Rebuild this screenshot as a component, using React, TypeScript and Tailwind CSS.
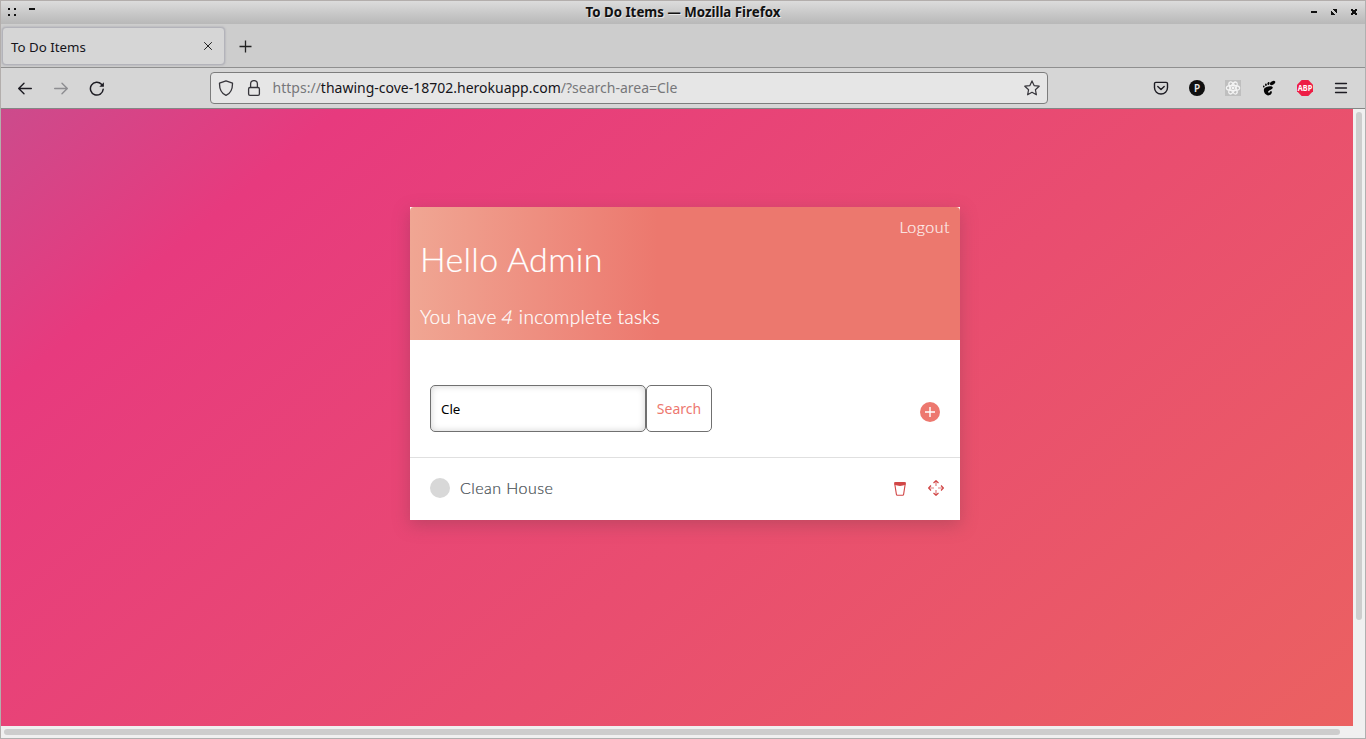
import React from 'react';

const CHROME = "font-['Noto_Sans',sans-serif]";

function TitleBar() {
  return (
    <div className="h-[23px] shrink-0 flex items-center bg-linear-to-b from-[#dcdcdc] to-[#b8b8b8] px-[7px]">
      <div className="flex w-[200px] items-center pb-px">
        <svg width="30" height="10" viewBox="0 0 30 10" shapeRendering="crispEdges" fill="#111">
          <path d="M0 1h2v2H0zM6 1h2v2H6zM0 7h2v2H0zM6 7h2v2H6zM21 1h6v2h-6z" />
        </svg>
      </div>
      <div className="flex-1 text-center text-[13.3px] leading-[21px] font-bold text-[#111] [text-shadow:1px_1px_0_#e8e8e8] whitespace-nowrap">
        <span className="inline-block">To Do Items — Mozilla Firefox</span>
      </div>
      <div className="flex w-[200px] justify-end pb-px">
        <svg width="47" height="8" viewBox="0 0 47 8" shapeRendering="crispEdges" fill="#111">
          <path d="M0 3h6v2H0z" />
          <path d="M22 1h4v4h-1V4h-1V3h-1V2h-1zM20 3h1v1h1v1h1v1h1v1h-4z" />
          <path d="M40 1h2v1h2V1h2v2h-1v2h1v2h-2V6h-2v1h-2V5h1V3h-1z" />
        </svg>
      </div>
    </div>
  );
}

function TabStrip() {
  return (
    <div className="flex h-11 shrink-0 items-start border-b border-[#8f8f8f] bg-[#cdcdcd] pt-[3px] pl-px">
      <div className="flex h-[38px] w-[223px] items-center justify-between rounded-[4px] border border-[#b3b3ba] bg-[#d6d6d6] pr-[11px] pl-2 shadow-[0_0_2px_rgba(120,120,140,0.5)]">
        <span className="pt-[3px] text-[13.3px] text-[#15141a]">To Do Items</span>
        <svg width="10" height="10" viewBox="0 0 10 10" stroke="#222" strokeWidth="1" fill="none">
          <path d="M1.2 1.2l7.6 7.6M8.8 1.2l-7.6 7.6" />
        </svg>
      </div>
      <svg className="mt-[13px] ml-[14px]" width="13" height="13" viewBox="0 0 13 13" stroke="#222" strokeWidth="1.3" fill="none">
        <path d="M6.5 .5v12M.5 6.5h12" />
      </svg>
    </div>
  );
}

function NavBar() {
  return (
    <div className="flex h-[41px] shrink-0 items-center border-b border-[#858585] bg-[#d6d6d6] pr-4 pl-4">
      <svg width="16" height="16" viewBox="0 0 16 16" fill="none" stroke="#1c1b22" strokeWidth="1.4" strokeLinecap="round" strokeLinejoin="round">
        <path d="M14.3 8.5H1.8M7 3.2L1.7 8.5 7 13.8" />
      </svg>
      <svg className="ml-5" width="16" height="16" viewBox="0 0 16 16" fill="none" stroke="#8d8d91" strokeWidth="1.4" strokeLinecap="round" strokeLinejoin="round">
        <path d="M1.7 8.5h12.5M9 3.2l5.3 5.3L9 13.8" />
      </svg>
      <svg className="ml-5" width="16" height="16" viewBox="0 0 16 16" fill="none" stroke="#1c1b22" strokeWidth="1.5" strokeLinecap="round">
        <path d="M14.2 9.3a6.4 6.4 0 1 1-1.7-5" />
        <path d="M14.9 2.2v4.6h-4.6z" fill="#1c1b22" stroke="none" />
      </svg>
      <div className="ml-[105px] flex h-8 w-[838px] items-center rounded-[4px] border border-[#7d7d7d] bg-[#e6e6e6] px-[7px]">
        <svg width="16" height="16" viewBox="0 0 16 16" fill="none" stroke="#36353b" strokeWidth="1.3" strokeLinejoin="round">
          <path d="M8 .8L14.5 3.2C14.6 8.8 12.8 13.2 8 15.4 3.2 13.2 1.4 8.8 1.5 3.2z" />
        </svg>
        <svg className="ml-3" width="16" height="16" viewBox="0 0 16 16" fill="none" stroke="#36353b" strokeWidth="1.3">
          <rect x="2.6" y="7.5" width="10.8" height="7.8" rx="1.4" />
          <path d="M4.6 7.5V4a3.4 3.4 0 0 1 6.8 0v3.5" />
        </svg>
        <div className="ml-[10.6px] flex-1 text-[14px] leading-5 whitespace-nowrap text-[#77777a]">
          https://<span className="text-[#15141a]">thawing-cove-18702.herokuapp.com</span>/?search-area=Cle
        </div>
        <svg width="16" height="16" viewBox="0 0 16 16" fill="none" stroke="#36353b" strokeWidth="1.2" strokeLinejoin="round">
          <path d="M8 .9l2.1 4.7 5.1.6-3.8 3.5 1 5.1L8 12.3l-4.4 2.5 1-5.1L.8 6.2l5.1-.6z" />
        </svg>
      </div>
      <div className="ml-auto flex items-center gap-5">
        <svg width="16" height="16" viewBox="0 0 16 16" fill="none" stroke="#1c1b22" strokeWidth="1.4" strokeLinecap="round" strokeLinejoin="round">
          <path d="M2.8 2.4h10.4a1.3 1.3 0 0 1 1.3 1.3v4a6.5 6.3 0 0 1-13 0v-4a1.3 1.3 0 0 1 1.3-1.3z" />
          <path d="M4.8 6.5L8 9.5l3.2-3" />
        </svg>
        <div className="flex size-4 items-center justify-center rounded-full bg-[#101010] text-[10px] leading-4 font-semibold text-[#e8e8e8]">P</div>
        <svg width="16" height="16" viewBox="0 0 16 16">
          <rect width="16" height="16" fill="#bfbfbf" />
          <g fill="none" stroke="#f4f4f4" strokeWidth="1.2">
            <ellipse cx="8" cy="8" rx="6.7" ry="2.6" />
            <ellipse cx="8" cy="8" rx="6.7" ry="2.6" transform="rotate(60 8 8)" />
            <ellipse cx="8" cy="8" rx="6.7" ry="2.6" transform="rotate(120 8 8)" />
          </g>
          <circle cx="8" cy="8" r="1.4" fill="#f5f5f5" />
        </svg>
        <svg width="16" height="16" viewBox="0 0 16 16" fill="#050505">
          <ellipse cx="11.6" cy="3" rx="2.9" ry="1.7" transform="rotate(-30 11.6 3)" />
          <ellipse cx="7.5" cy="3.5" rx="1" ry="1.5" transform="rotate(15 7.5 3.5)" />
          <ellipse cx="4.9" cy="4.8" rx=".9" ry="1.3" />
          <ellipse cx="2.8" cy="6.5" rx=".8" ry="1.1" transform="rotate(-15 2.8 6.5)" />
          <path d="M11.8 7.4C11.5 5.3 4.5 6 3.2 8.6 2 11.5 4.2 15.3 7.2 15.4c2.4 0 3.9-1.7 3.6-3.6-.1-1-1.3-1.1-1.6-.2-.2.8-.8 1.5-1.6 1.1-.9-.5-.6-1.7.6-2.3 1.6-.8 3.8-1.3 3.6-3z" />
        </svg>
        <svg className="overflow-visible" width="16" height="16" viewBox="0 0 16 16">
          <path d="M4.7 0h6.6L16 4.7v6.6L11.3 16H4.7L0 11.3V4.7z" fill="#ed1e45" />
          <text x="8" y="11.2" textAnchor="middle" fontSize="8.8" fontWeight="700" fill="#fff" textLength="14.4" lengthAdjust="spacingAndGlyphs" fontFamily="Noto Sans">ABP</text>
        </svg>
        <svg width="16" height="16" viewBox="0 0 16 16" stroke="#1c1b22" strokeWidth="1.3" strokeLinecap="round">
          <path d="M2.5 3.5h11M2.5 8h11M2.5 12.5h11" />
        </svg>
      </div>
    </div>
  );
}

function TaskHeader() {
  return (
    <header className="flex h-[133px] flex-col rounded-t-[4px] bg-[linear-gradient(90deg,#f0a693_0%,#ec786e_45%,#ec786e_100%)] px-[10px] text-white">
      <div className="flex h-[39px] items-center justify-end text-[16px] tracking-[0.5px] text-[#fdeeec]">Logout</div>
      <h1 className="mt-[-8px] h-[42px] text-[34px] leading-[42px] tracking-[0.32px] whitespace-nowrap">Hello Admin</h1>
      <p className="mt-[24px] text-[19px] leading-[26px] tracking-[0.3px] whitespace-nowrap">
        You have <span className="inline-block -skew-x-12">4</span> incomplete tasks
      </p>
    </header>
  );
}

function TaskCard() {
  return (
    <main className="mt-[98px] ml-[409px] h-[313px] w-[550px] bg-white font-['Lato',sans-serif] font-light [-webkit-text-stroke:0.2px] shadow-[0_5px_16px_rgba(110,60,70,0.34)]">
      <TaskHeader />
      <div className="flex h-[118px] items-center justify-between border-b border-[#e0e0e0] px-5 pt-[20px] font-['Noto_Sans',sans-serif] font-normal [-webkit-text-stroke:0]">
        <div className="flex">
          <div className="flex h-[47px] w-[216px] items-center rounded-[5px] border border-[#707070] px-[10px] pt-[2px] text-[13.3px] text-black shadow-[inset_0_0_7px_rgba(0,0,0,0.18)]">Cle</div>
          <div className="flex h-[47px] w-[66px] items-center justify-center rounded-[5px] border border-[#707070] text-[14px] text-[#ed786f]">Search</div>
        </div>
        <svg className="mt-[6px]" width="20" height="20" viewBox="0 0 20 20">
          <circle cx="10" cy="10" r="10" fill="#ed786f" />
          <path d="M10 5v10M5 10h10" stroke="#fff" strokeWidth="1.4" />
        </svg>
      </div>
      <div className="flex h-[62px] items-center px-5">
        <span className="mb-[2px] size-5 rounded-full bg-[#d8d8d8]" />
        <span className="mb-[2px] ml-[10px] text-[16px] tracking-[0.45px] text-[#434b50]">Clean House</span>
        <svg className="ml-auto" width="12" height="14" viewBox="0 0 12 14">
          <path d="M.8 2.2l1.6 10.2q.1.9 1 .9h5.2q.9 0 1-.9l1.6-10.2" fill="none" stroke="#d14747" strokeWidth="1.1" strokeLinejoin="round" />
          <path d="M0 1Q0 0 1.5 0h9Q12 0 12 1l-.4 1.8Q6 5 .4 2.8z" fill="#d14747" />
        </svg>
        <svg className="ml-[22px] mr-[-4px] mb-[2px]" width="16" height="16" viewBox="0 0 16 16" fill="none" stroke="#d14747" strokeWidth="1.2">
          <path d="M8 1v5M8 10v5M1 8h5M10 8h5" strokeOpacity=".7" />
          <path d="M5.5 3L8 .7 10.5 3M5.5 13L8 15.3l2.5-2.3M3 5.5L.7 8 3 10.5M13 5.5L15.3 8 13 10.5" />
        </svg>
      </div>
    </main>
  );
}

export default function App() {
  return (
    <div className={`flex h-[739px] w-[1366px] flex-col overflow-hidden border border-t-[#b3aeac] border-r-[#b0b0b0] border-b-[#b0b0b0] border-l-[#b3aeac] bg-[#f0f0f0] ${CHROME}`}>
      <TitleBar />
      <TabStrip />
      <NavBar />
      <div className="flex h-[617px] shrink-0">
        <div className="h-full w-[1352px] bg-[linear-gradient(140deg,#cc4b8c_0%,#e73a7e_16.3%,#eb6161_100%)]">
          <TaskCard />
        </div>
        <div className="flex-1 pt-[3px] pl-[3px]">
          <div className="h-[508px] w-[6px] rounded-full bg-[#cdcdcd]" />
        </div>
      </div>
      <div className="pt-[3px] pl-[3px]">
        <div className="h-[6px] w-[1336px] rounded-full bg-[#cdcdcd]" />
      </div>
    </div>
  );
}
